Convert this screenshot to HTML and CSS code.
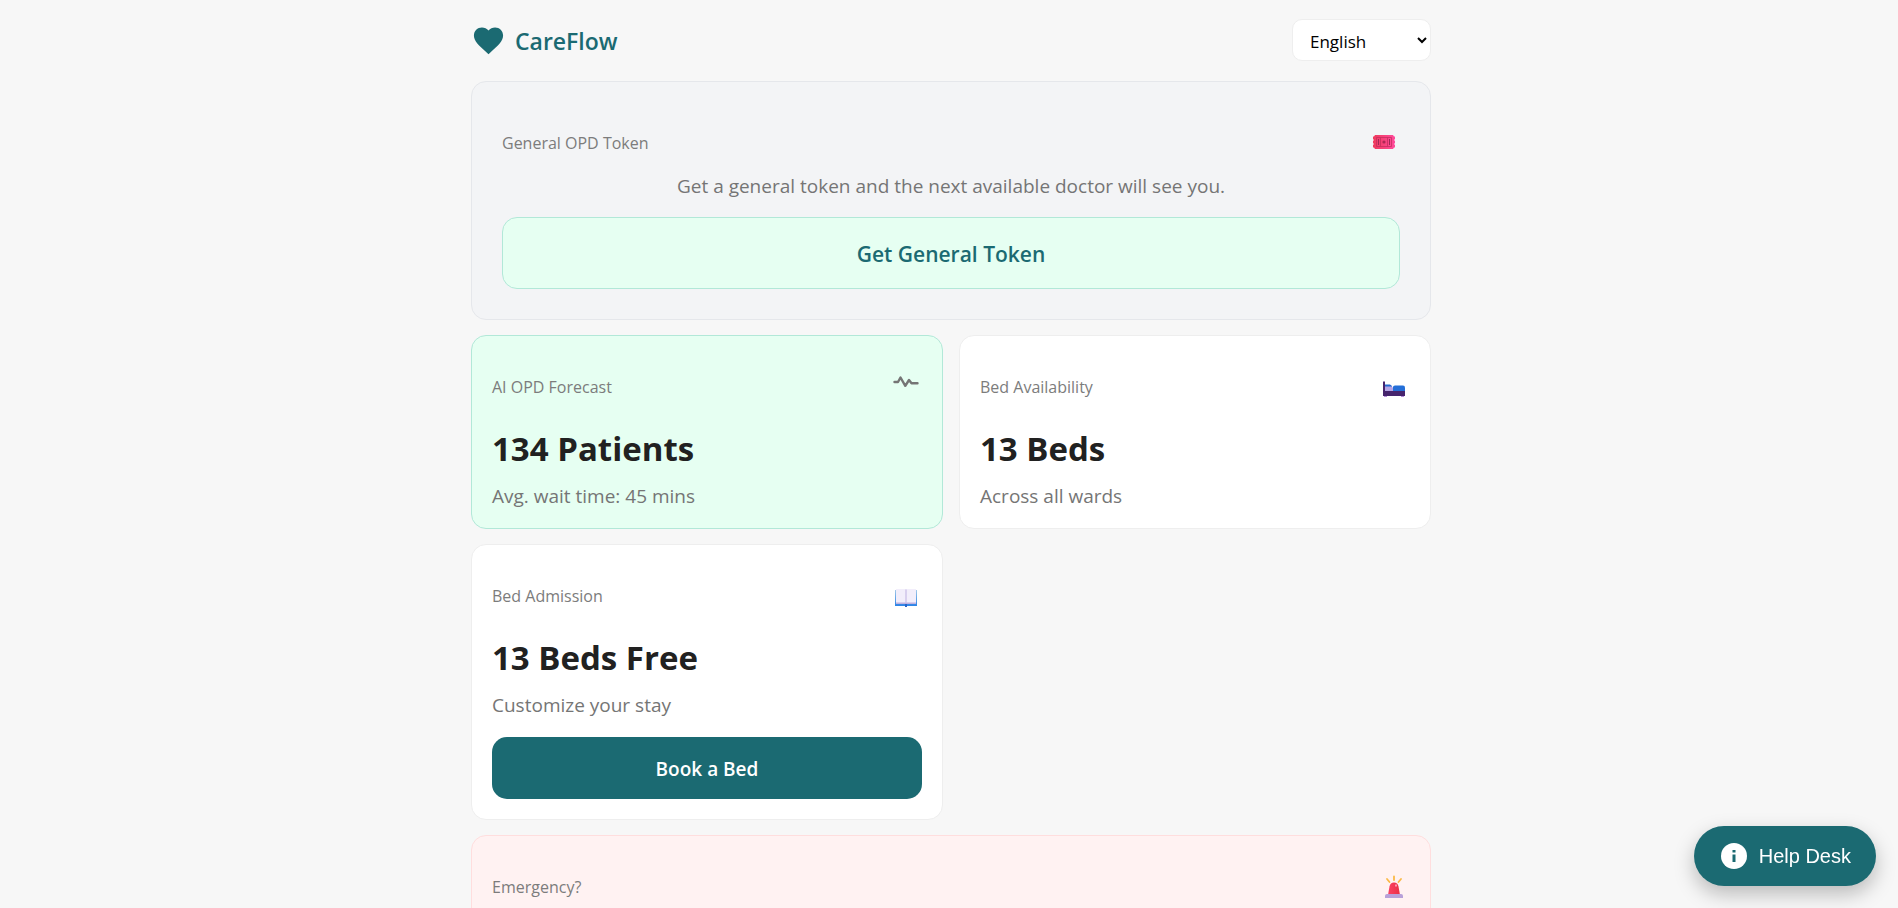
FILE: index.html
```html
<!DOCTYPE html>
<html lang="en">
<head>
<meta charset="utf-8">
<meta name="viewport" content="width=device-width, initial-scale=1">
<title>CareFlow</title>
<link rel="stylesheet" href="styles.css">
</head>
<body>
<div class="page">
  <header class="header">
    <div class="brand">
      <svg class="brand-icon" viewBox="0 0 24 24" aria-hidden="true"><path fill="currentColor" d="M12 21.35l-1.45-1.32C5.4 15.36 2 12.28 2 8.5 2 5.42 4.42 3 7.5 3c1.74 0 3.41.81 4.5 2.09C13.09 3.81 14.76 3 16.5 3 19.58 3 22 5.42 22 8.5c0 3.78-3.4 6.86-8.55 11.54L12 21.35z"/></svg>
      <span class="brand-name">CareFlow</span>
    </div>
    <select class="language" aria-label="Language">
      <option>English</option>
    </select>
  </header>

  <main class="cards">
    <section class="card card-token">
      <div class="card-head">
        <h2 class="label">General OPD Token</h2>
        <svg class="icon icon-token" viewBox="0 0 28 28" aria-hidden="true">
          <defs><linearGradient id="ticket" x1="0" x2="1"><stop offset="0" stop-color="#ee3a5c"/><stop offset="1" stop-color="#ff4a9c"/></linearGradient></defs>
          <path fill="url(#ticket)" d="M5 7h18l1 1.500h1v2.500l-1 1 1 1v2l-1 1 1 1v2.500h-1l-1 1.500H5l-1-1.500H3V17l1-1-1-1v-2l1-1-1-1V8.500h1z"/>
          <path fill="none" stroke="#c32c5e" stroke-opacity=".75" d="M6.500 9.500h15v9h-15zM10.500 9.500v9M17.500 9.500v9"/>
          <path fill="none" stroke="#9d2a55" d="M8.500 11v6M19.500 11v6"/>
          <circle cx="14" cy="14" r="1.600" fill="#ad2854"/>
        </svg>
      </div>
      <p class="sub sub-center">Get a general token and the next available doctor will see you.</p>
      <button class="btn btn-token" type="button">Get General Token</button>
    </section>

    <section class="card card-forecast">
      <div class="card-head">
        <h2 class="label">AI OPD Forecast</h2>
        <svg class="icon icon-pulse" viewBox="0 0 28 28" aria-hidden="true"><path fill="none" stroke="#757575" stroke-width="2.400" stroke-linecap="round" stroke-linejoin="round" d="M2.500 14H6L8.500 9.500l4.800 8.300L17 12l2.500 3.200H25.500"/></svg>
      </div>
      <p class="value">134 Patients</p>
      <p class="sub">Avg. wait time: 45 mins</p>
    </section>

    <section class="card">
      <div class="card-head">
        <h2 class="label">Bed Availability</h2>
        <svg class="icon icon-low" viewBox="0 0 28 28" aria-hidden="true">
          <path fill="#b58adc" d="M4 20h3v2H4zM21 20h3v2h-3z"/>
          <path fill="#46246d" d="M3 6.500h2V15h20v6H3z"/>
          <path fill="#2468cf" d="M5 9.500h5l2 1.500v2H5z"/>
          <path fill="#b5a4e5" d="M5 11.500h7l1 1.500v3H5z"/>
          <path fill="#246fd8" d="M13 12q0-1.500 2-1.500h8q2 0 2 2V16H13z"/>
        </svg>
      </div>
      <p class="value">13 Beds</p>
      <p class="sub">Across all wards</p>
    </section>

    <section class="card">
      <div class="card-head">
        <h2 class="label">Bed Admission</h2>
        <svg class="icon icon-low" viewBox="0 0 28 28" aria-hidden="true">
          <defs><linearGradient id="cover" x2="0" y2="1"><stop offset="0" stop-color="#a3c9e8"/><stop offset="1" stop-color="#2c83e6"/></linearGradient></defs>
          <path fill="url(#cover)" d="M3 6h22v16H3z"/>
          <path fill="#2763c9" d="M13 20h2v3h-2z"/>
          <path fill="#f2eefb" d="M4 5h20v14.500H4z"/>
          <path fill="#bfb1e0" d="M4 18.500h20V20H4z"/>
          <path fill="#cdc2e8" d="M13.300 5.500h1.400V19h-1.400z"/>
        </svg>
      </div>
      <p class="value">13 Beds Free</p>
      <p class="sub">Customize your stay</p>
      <button class="btn btn-book" type="button">Book a Bed</button>
    </section>

    <section class="card card-emergency">
      <div class="card-head">
        <h2 class="label">Emergency?</h2>
        <svg class="icon icon-low" viewBox="0 0 28 28" aria-hidden="true">
          <defs><linearGradient id="lamp" x1="0" x2="1"><stop offset="0" stop-color="#fb4163"/><stop offset="1" stop-color="#ea2f45"/></linearGradient></defs>
          <path fill="none" stroke="#fbb945" stroke-width="1.800" stroke-linecap="round" d="M14 1.500v3.500M7 4l2.500 3M21 4l-2.500 3"/>
          <path fill="url(#lamp)" d="M8 20l1.500-8.500q.8-4 4.500-4t4.500 4L20 20z"/>
          <path fill="#ff93ad" d="M15 9.500h2v2h-2z"/>
          <path fill="#b8a1d9" d="M5 21q0-2 2-2h14q2 0 2 2v2H5z"/>
        </svg>
      </div>
    </section>
  </main>
</div>

<button class="help" type="button">
  <svg class="help-icon" viewBox="0 0 26 26" aria-hidden="true"><circle cx="13" cy="13" r="13" fill="#fff"/><path fill="#1b6a72" d="M11.500 7h3v2.500h-3zM11.500 11.500h3V19h-3z"/></svg>
  Help Desk
</button>
</body>
</html>
```
FILE: styles.css
```css
* {
  box-sizing: border-box;
}

html {
  overflow: hidden;
}

body {
  margin: 0;
  padding-left: 4px;
  background: #f7f7f7;
  color: #212121;
  font-family: "Segoe UI", "Open Sans", "Noto Sans", sans-serif;
}

.page {
  max-width: 960px;
  margin: 0 auto;
  padding-top: 19px;
}

.header {
  display: flex;
  justify-content: space-between;
  align-items: center;
  margin-bottom: 20px;
}

.brand {
  display: flex;
  align-items: center;
  gap: 9px;
  color: #1b6a72;
}

.brand-icon {
  width: 35px;
  height: 35px;
}

.brand-name {
  padding-top: 2px;
  font-size: 23px;
  line-height: 32px;
  font-weight: 600;
}

.language {
  width: 139px;
  height: 42px;
  padding: 2px 0 0 13px;
  border: 1px solid #eeeeee;
  border-radius: 10px;
  background: #fff;
  color: #000;
  font: 17px "Segoe UI", "Open Sans", "Noto Sans", sans-serif;
}

.cards {
  display: grid;
  grid-template-columns: 1fr 1fr;
  gap: 15px 16px;
}

.card {
  display: flex;
  flex-direction: column;
  padding: 20px;
  border: 1px solid #eeeeee;
  border-radius: 15px;
  background: #fff;
}

.card-token,
.card-emergency {
  grid-column: 1 / -1;
}

.card-token {
  padding: 30px;
  background: #f3f4f6;
  border-color: #e5e7eb;
}

.card-forecast {
  background: #e6fff2;
  border-color: #b2e8d8;
}

.card-emergency {
  min-height: 200px;
  background: #fff2f2;
  border-color: #ffdede;
}

.card-head {
  display: flex;
  justify-content: space-between;
  align-items: center;
  height: 60px;
}

.label {
  margin: 0;
  padding-top: 2px;
  color: #7c7c7c;
  font-size: 16px;
  line-height: 24px;
  font-weight: 400;
}

.icon {
  width: 28px;
  height: 28px;
  margin-right: 2px;
}

.icon-pulse {
  margin-bottom: 8px;
}

.icon-low {
  margin-top: 5px;
}

.value {
  margin: 9px 0;
  font-size: 33px;
  line-height: 48px;
  font-weight: 700;
}

.sub {
  margin: 0;
  color: #757575;
  font-size: 19px;
  line-height: 28px;
}

.sub-center {
  text-align: center;
}

.btn {
  border-radius: 15px;
  font-family: inherit;
  font-weight: 600;
}

.btn-token {
  height: 72px;
  margin-top: 17px;
  padding-top: 3px;
  border: 1px solid #b2e8d8;
  background: #e6fff2;
  color: #1b6a72;
  font-size: 21px;
}

.btn-book {
  height: 62px;
  margin-top: 18px;
  padding-top: 3px;
  border: 0;
  background: #1b6a72;
  color: #fff;
  font-size: 19px;
}

.card-forecast,
.card-forecast + .card {
  padding-bottom: 18px;
}

.help {
  position: fixed;
  right: 22px;
  bottom: 22px;
  display: flex;
  align-items: center;
  gap: 12px;
  height: 60px;
  padding: 0 25px 0 27px;
  border: 0;
  border-radius: 30px;
  background: #1b6a72;
  box-shadow: 0 8px 20px rgba(0, 0, 0, 0.25);
  color: #fff;
  font: 20px "Liberation Sans", Arial, sans-serif;
}

.help-icon {
  width: 26px;
  height: 26px;
}
```
